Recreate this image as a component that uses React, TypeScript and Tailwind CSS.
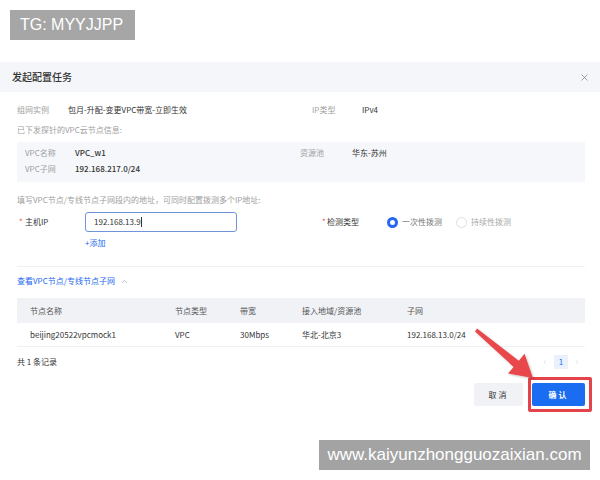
import React from "react";
import { X, ChevronUp, ChevronLeft, ChevronRight } from "lucide-react";

const font = { fontFamily: '"Noto Sans CJK SC", "Noto Sans", sans-serif' };

function Radio({ checked, label }: { checked: boolean; label: string }) {
  return (
    <div className="flex items-center gap-[4px]">
      {checked ? (
        <span className="w-[11px] h-[11px] rounded-full border-[3px] border-[#2468f2] bg-white box-border" />
      ) : (
        <span className="w-[11px] h-[11px] rounded-full border border-[#dcdfe6] bg-white box-border" />
      )}
      <span className={checked ? "text-[#777]" : "text-[#aaa]"}>{label}</span>
    </div>
  );
}

export default function App() {
  return (
    <div
      className="relative w-[600px] h-[480px] bg-white overflow-hidden text-[8px] leading-[12px] text-[#333]"
      style={font}
    >
      {/* top watermark */}
      <div className="h-[62px] pt-[10px] pl-[10px]">
        <div
          className="w-[125px] h-[30px] bg-[#a6a6a6] text-white text-[16px] flex items-center pl-[10px]"
          style={{ fontFamily: '"Liberation Sans", Arial, sans-serif' }}
        >
          TG: MYYJJPP
        </div>
      </div>

      {/* header */}
      <div className="h-[30px] bg-[#f4f6f9] flex items-center justify-between pl-[12px] pr-[10px]">
        <span className="text-[10px] leading-[14px] text-[#333] font-medium">发起配置任务</span>
        <X size={11} strokeWidth={1.3} className="text-[#666]" />
      </div>

      {/* body */}
      <div className="pl-[17px] pr-[15px]">
        <div className="mt-[12px] flex">
          <div className="w-[295px] flex">
            <span className="w-[51px] text-[#a0a0a0]">组网实例</span>
            <span className="text-[#333]">包月-升配-变更VPC带宽-立即生效</span>
          </div>
          <div className="flex">
            <span className="w-[50px] text-[#a0a0a0]">IP类型</span>
            <span className="text-[#333]">IPv4</span>
          </div>
        </div>

        <div className="mt-[8px] text-[#a0a0a0]">已下发探针的VPC云节点信息:</div>

        <div className="mt-[6px] h-[40px] bg-[#f5f7fa] pl-[8px] pt-[5px] flex flex-col gap-[4px]">
          <div className="flex">
            <div className="w-[275px] flex">
              <span className="w-[50px] text-[#a0a0a0]">VPC名称</span>
              <span className="font-medium text-[#333]">VPC_w1</span>
            </div>
            <div className="flex">
              <span className="w-[52px] text-[#a0a0a0]">资源池</span>
              <span className="text-[#333]">华东-苏州</span>
            </div>
          </div>
          <div className="flex">
            <span className="w-[50px] text-[#a0a0a0]">VPC子网</span>
            <span className="font-medium text-[#333]">192.168.217.0/24</span>
          </div>
        </div>

        <div className="mt-[12px] text-[#a0a0a0]">填写VPC节点/专线节点子网段内的地址，可同时配置拨测多个IP地址:</div>

        <div className="mt-[6px] flex items-center h-[20px]">
          <div className="w-[303px] flex items-center pl-[2px]">
            <span className="w-[6px] text-[#f04848]">*</span>
            <span className="w-[60px] text-[#333]">主机IP</span>
            <div className="w-[152px] h-[20px] border border-[#6f94dc] rounded-[3px] flex items-center pl-[8px] text-[#333]">
              192.168.13.9<span className="w-px h-[10px] bg-[#333]" />
            </div>
          </div>
          <div className="flex items-center pl-[2px]">
            <span className="w-[5px] text-[#f04848]">*</span>
            <span className="w-[60px] text-[#333]">检测类型</span>
            <div className="flex items-center gap-[14px]">
              <Radio checked label="一次性拨测" />
              <Radio checked={false} label="持续性拨测" />
            </div>
          </div>
        </div>

        <div className="mt-[5px] ml-[68px] text-[#2468f2]">+添加</div>

        <div className="mt-[17px] h-px bg-[#eef0f3]" />

        <div className="mt-[8px] flex items-center gap-[5px] text-[#2468f2]">
          <span>查看VPC节点/专线节点子网</span>
          <ChevronUp size={9} strokeWidth={1.5} className="text-[#8a96aa]" />
        </div>

        {/* table */}
        <div className="mt-[11px]">
          <div className="h-[25px] bg-[#f0f2f5] flex items-center text-[#555]">
            <span className="w-[158px] pl-[13px]">节点名称</span>
            <span className="w-[65px]">节点类型</span>
            <span className="w-[62px]">带宽</span>
            <span className="w-[105px]">接入地域/资源池</span>
            <span>子网</span>
          </div>
          <div className="h-[24px] border-b border-[#eef0f3] flex items-center text-[#333]">
            <span className="w-[158px] pl-[13px]">beijing20522vpcmock1</span>
            <span className="w-[65px]">VPC</span>
            <span className="w-[62px]">30Mbps</span>
            <span className="w-[105px]">华北-北京3</span>
            <span>192.168.13.0/24</span>
          </div>
        </div>

        <div className="mt-[8px] h-[14px] flex items-center justify-between">
          <span className="text-[#333]">共 1 条记录</span>
          <div className="mr-[4px] flex items-center gap-[5px] text-[#c8ccd4]">
            <ChevronLeft size={8} strokeWidth={1.5} />
            <span className="w-[14px] h-[14px] bg-[#eaf1fd] text-[#2468f2] flex items-center justify-center">1</span>
            <ChevronRight size={8} strokeWidth={1.5} />
          </div>
        </div>

        <div className="mt-[14px] flex justify-end gap-[9px]">
          <button className="w-[49px] h-[23px] bg-[#f0f2f5] text-[#333] text-[8px] rounded-[2px] tracking-[2px]">
            取消
          </button>
          <div className="relative">
            <button className="w-[53px] h-[23px] bg-[#1a6cf0] text-white text-[8px] font-bold rounded-[2px] tracking-[2px]">
              确认
            </button>
            <span className="absolute -top-[6px] -left-[4px] -right-[7px] -bottom-[6px] border-[3px] border-[#e5434a] rounded-[2px]" />
          </div>
        </div>
      </div>

      {/* red arrow overlay */}
      <svg className="absolute left-0 top-0 pointer-events-none" width="600" height="480" viewBox="0 0 600 480">
        <defs>
          <filter id="sh" x="-20%" y="-20%" width="140%" height="140%">
            <feDropShadow dx="1" dy="1" stdDeviation="1" floodColor="#000" floodOpacity="0.25" />
          </filter>
        </defs>
        <polygon
          points="477,328.6 518.8,360.7 524.5,353.8 533,378 508,373.6 513.6,366.9 475,331.4"
          fill="#e8474b"
          filter="url(#sh)"
        />
      </svg>

      {/* bottom watermark */}
      <div
        className="absolute left-[319px] top-[440px] w-[271px] h-[30px] bg-[#a3a3a3] text-white text-[17px] flex items-center justify-center"
        style={{ fontFamily: '"Liberation Sans", Arial, sans-serif' }}
      >
        www.kaiyunzhongguozaixian.com
      </div>
    </div>
  );
}
